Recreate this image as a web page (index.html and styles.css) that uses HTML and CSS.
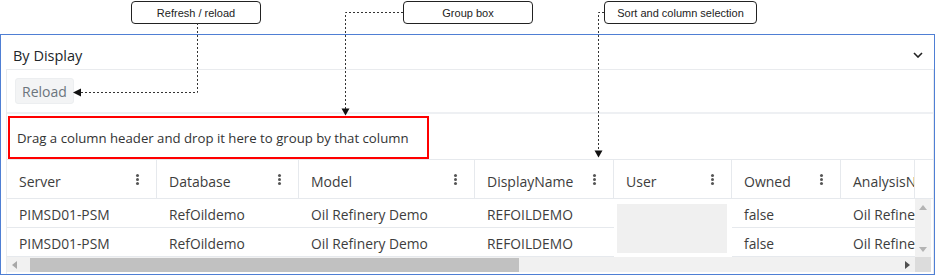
FILE: index.html
```html
<!DOCTYPE html>
<html>
<head>
<meta charset="utf-8">
<title>By Display</title>
<link rel="stylesheet" href="styles.css">
</head>
<body>
<div class="page">
  <div class="callouts">
    <div class="callout c-reload">Refresh / reload</div>
    <div class="callout c-group">Group box</div>
    <div class="callout c-sort">Sort and column selection</div>
  </div>

  <section class="card">
    <header class="card-head">
      <span class="title">By Display</span>
      <svg class="chevron" width="10" height="6" viewBox="0 0 10 6"><polyline points="1,1 5,5 9,1" fill="none" stroke="#222" stroke-width="1.6"/></svg>
    </header>
    <div class="card-body">
      <div class="toolbar"><button class="btn">Reload</button></div>
      <div class="group-panel">Drag a column header and drop it here to group by that column</div>
      <div class="grid">
        <div class="thead">
          <div class="th"><span>Server</span><i class="kebab"></i></div>
          <div class="th"><span>Database</span><i class="kebab"></i></div>
          <div class="th"><span>Model</span><i class="kebab"></i></div>
          <div class="th"><span>DisplayName</span><i class="kebab"></i></div>
          <div class="th"><span>User</span><i class="kebab"></i></div>
          <div class="th"><span>Owned</span><i class="kebab"></i></div>
          <div class="th clip"><span>AnalysisName</span></div>
          <div class="th-blank"></div>
        </div>
        <div class="tbody">
          <div class="rows">
            <div class="tr first">
              <div class="td">PIMSD01-PSM</div>
              <div class="td">RefOildemo</div>
              <div class="td">Oil Refinery Demo</div>
              <div class="td">REFOILDEMO</div>
              <div class="td user"><div class="skeleton"></div></div>
              <div class="td">false</div>
              <div class="td clip">Oil Refinery Demo</div>
            </div>
            <div class="tr second">
              <div class="td">PIMSD01-PSM</div>
              <div class="td">RefOildemo</div>
              <div class="td">Oil Refinery Demo</div>
              <div class="td">REFOILDEMO</div>
              <div class="td user"><div class="skeleton"></div></div>
              <div class="td">false</div>
              <div class="td clip">Oil Refinery Demo</div>
            </div>
          </div>
          <div class="vscroll">
            <svg width="8" height="5" viewBox="0 0 8 5"><polygon points="0,5 8,5 4,0" fill="#b4b4b4"/></svg>
            <svg width="8" height="5" viewBox="0 0 8 5"><polygon points="0,0 8,0 4,5" fill="#b4b4b4"/></svg>
          </div>
        </div>
        <div class="hscroll-row">
          <div class="hscroll">
            <svg class="arr" width="5" height="8" viewBox="0 0 5 8"><polygon points="5,0 5,8 0,4" fill="#a8a8a8"/></svg>
            <div class="track"><div class="thumb"></div></div>
            <svg class="arr" width="5" height="8" viewBox="0 0 5 8"><polygon points="0,0 0,8 5,4" fill="#505050"/></svg>
          </div>
          <div class="corner"></div>
        </div>
      </div>
    </div>
  </section>

  <div class="highlight"></div>
  <svg class="annotations" width="936" height="276" viewBox="0 0 936 276">
    <g fill="none" stroke="#333" stroke-width="1" stroke-dasharray="2,2">
      <polyline points="197.5,23 197.5,92.5 81,92.5"/>
      <polyline points="403,12.5 345.5,12.5 345.5,109"/>
      <polyline points="604,12.5 598.5,12.5 598.5,151"/>
    </g>
    <g fill="#111">
      <polygon points="73,92.5 81,88.5 81,96.5"/>
      <polygon points="341.5,108.5 349.5,108.5 345.5,115.5"/>
      <polygon points="594.5,150.5 602.5,150.5 598.5,157.5"/>
    </g>
  </svg>
</div>
</body>
</html>
```

FILE: styles.css
```css
* { box-sizing: border-box; }
html, body { margin: 0; padding: 0; background: #fff; }
body { font-family: "Open Sans", "Noto Sans", sans-serif; color: #333; }

.page { position: relative; width: 936px; height: 276px; overflow: hidden; }

.callouts { height: 34px; display: flex; align-items: flex-start; padding: 1px 0 0 131px; }
.callout {
  height: 23px; border: 1px solid #222; border-radius: 4px; background: #fff;
  display: flex; align-items: center; justify-content: center;
  font-family: "Liberation Sans", sans-serif; font-size: 11px; color: #222;
}
.c-reload { width: 130px; }
.c-group { width: 130px; margin-left: 142px; }
.c-sort { width: 153px; margin-left: 71px; }

.card { width: 935px; height: 241px; border: 1.5px solid #4f7fd4; display: flex; flex-direction: column; }
.card-head { height: 34px; flex: none; display: flex; align-items: center; justify-content: space-between; padding: 6px 11px 0 12px; }
.title { font-size: 14.5px; color: #212529; }
.chevron { display: block; }

.card-body { margin-left: 5px; margin-right: 0.5px; border: 1px solid #e9ebee; border-bottom: none; flex: 1; display: flex; flex-direction: column; }
.toolbar { height: 44px; flex: none; padding: 8px 0 0 8px; border-bottom: 2px solid #eef0f3; }
.btn {
  height: 26px; padding: 1px 6px 0; border: 1px solid #eceef0; border-radius: 3px;
  background: #f3f4f5; color: #6c757d; font-family: inherit; font-size: 14px; line-height: 24px;
}
.group-panel { height: 45px; flex: none; display: flex; align-items: center; padding: 3px 0 0 10px; font-size: 13.2px; color: #333; }

.grid { display: flex; flex-direction: column; border-top: 1px solid #e6e9ed; }
.thead, .tr { display: grid; grid-template-columns: 150px 142px 176px 139px 118px 109px 74px; }
.thead { grid-template-columns: 150px 142px 176px 139px 118px 109px 74px 1fr; height: 39px; border-bottom: 1px solid #e6e9ed; }
.th { display: flex; align-items: center; justify-content: space-between; padding: 4px 17px 0 12px; border-right: 1px solid #e6e9ed; font-size: 14px; color: #3d3d3d; overflow: hidden; white-space: nowrap; }
.th .kebab { margin-top: -4px; }
.th.clip { padding-right: 0; }
.kebab { position: relative; width: 3px; height: 3px; border-radius: 50%; background: #555; box-shadow: 0 -4px 0 #555, 0 4px 0 #555; flex: none; }

.tbody { display: flex; }
.rows { width: 908px; }
.tr { height: 29px; }
.td { display: flex; align-items: center; padding: 3px 0 0 12px; border-bottom: 1px solid #e6e9ed; font-size: 13.8px; color: #3d3d3d; white-space: nowrap; overflow: hidden; }
.td.clip { text-overflow: clip; }
.td.user { border-bottom: none; padding: 5px 5px 0 3px; align-items: stretch; }
.second .td.user { padding: 0 5px 4px 3px; }
.skeleton { flex: 1; background: #f0f0f0; }

.vscroll { width: 16px; height: 58px; background: #f1f1f1; display: flex; flex-direction: column; align-items: center; justify-content: space-between; padding: 6px 0 5px; }
.vscroll svg { display: block; }

.hscroll-row { display: flex; height: 15px; }
.hscroll { width: 908px; display: flex; align-items: center; background: #f1f1f1; padding: 0 5px 0 5px; }
.arr { display: block; flex: none; }
.track { flex: 1; height: 15px; padding: 0 0 0 13px; display: flex; align-items: center; }
.thumb { width: 489px; height: 14px; background: #c1c1c1; }
.corner { width: 16px; background: #dcdcdc; }

.highlight { position: absolute; left: 8px; top: 116px; width: 421px; height: 43px; border: 2px solid #f00; pointer-events: none; }
.annotations { position: absolute; left: 0; top: 0; pointer-events: none; }
```
